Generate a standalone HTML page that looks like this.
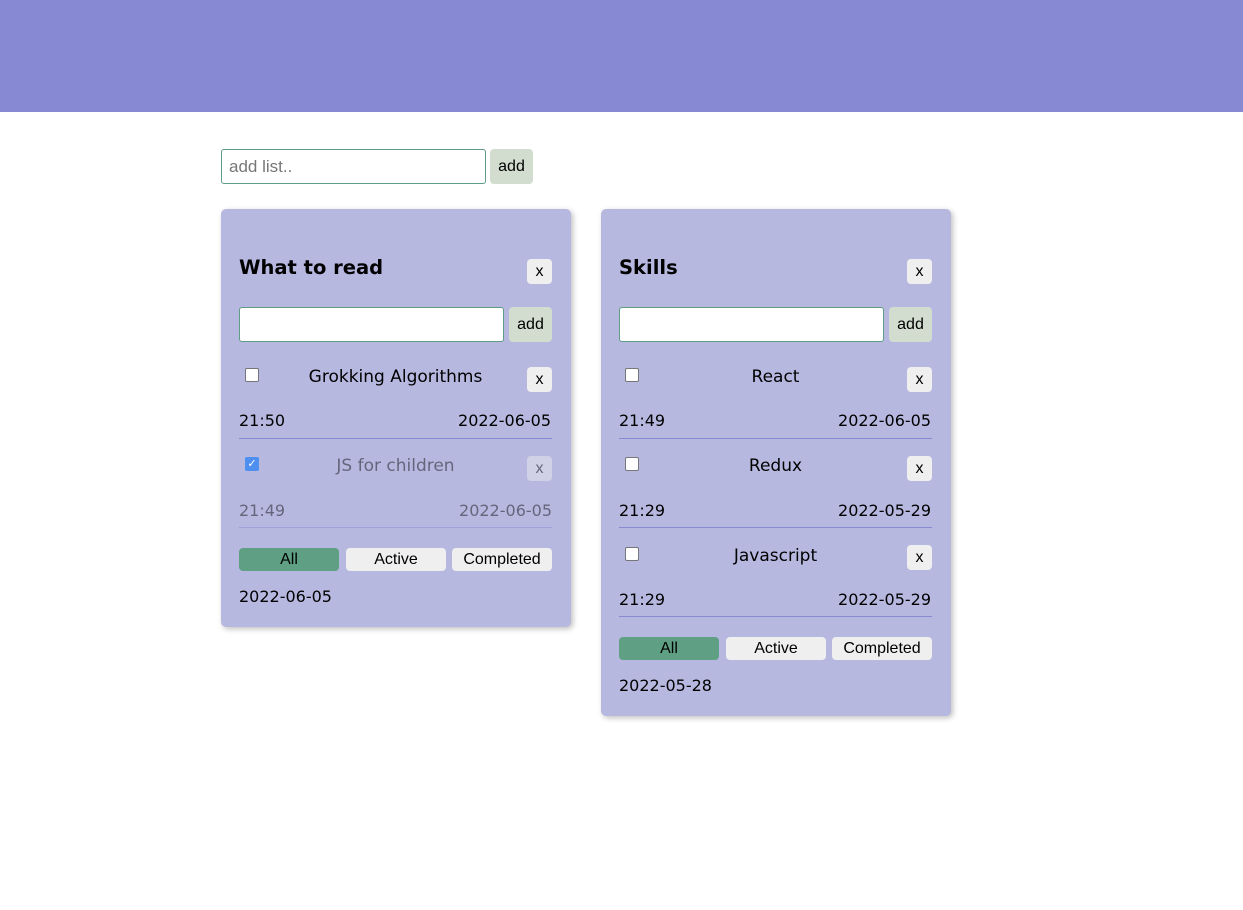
<!DOCTYPE html>
<html><head><meta charset="utf-8"><style>
*{box-sizing:border-box;margin:0;padding:0}
body{width:1243px;height:910px;background:#fff;font-family:"DejaVu Sans","Liberation Sans",sans-serif;position:relative;overflow:hidden;color:#000}
.a{position:absolute}
.hdr{left:0;top:0;width:1243px;height:112px;background:#8789d3}
.inp{background:#fff;border:1px solid #5f9c84;border-radius:3px}
.addb{background:#d2ddcf;border-radius:4px;font-family:"Liberation Sans",sans-serif;font-size:16px;display:flex;align-items:center;justify-content:center}
.card{background:#b7b8e0;border-radius:5px;box-shadow:2px 2px 6px rgba(0,0,0,.25)}
.xb{width:25px;height:25px;background:#efefef;border-radius:4px;font-family:"Liberation Sans",sans-serif;font-size:16px;display:flex;align-items:center;justify-content:center}
.t{font-size:17px;white-space:nowrap}
.d{font-size:16px;white-space:nowrap}
.cb{width:14px;height:14px;border:1px solid #767676;border-radius:2px;background:#fff}
.cbc{width:14px;height:14px;border-radius:2px;background:#4f8ff0;color:#fff;font-size:11px;text-align:center;line-height:14px;font-weight:bold}
.ln{height:1px;background:#8789d3}
.f{height:23px;border-radius:4px;font-family:"Liberation Sans",sans-serif;font-size:16px;display:flex;align-items:center;justify-content:center;background:#efefef;width:100px}
.title{font-size:19.5px;font-weight:bold}
.dim{opacity:.45}
</style></head><body>
<div class="a hdr"></div>
<div class="a inp" style="left:221px;top:149px;width:265px;height:35px"></div>
<div class="a" style="left:229px;top:157px;font-family:'Liberation Sans',sans-serif;font-size:17px;color:#777">add list..</div>
<div class="a addb" style="left:490px;top:149px;width:43px;height:35px">add</div>

<!-- card 1 -->
<div class="a card" style="left:221px;top:209px;width:350px;height:418px"></div>
<div class="a title" style="left:239px;top:256px">What to read</div>
<div class="a xb" style="left:527px;top:259px">x</div>
<div class="a inp" style="left:239px;top:307px;width:265px;height:35px"></div>
<div class="a addb" style="left:509px;top:307px;width:43px;height:35px">add</div>

<div class="a cb" style="left:245px;top:368px"></div>
<div class="a t" style="left:239px;width:313px;text-align:center;top:367px">Grokking Algorithms</div>
<div class="a xb" style="left:527px;top:367px">x</div>
<div class="a d" style="left:239px;top:411px">21:50</div>
<div class="a d" style="right:692px;top:411px">2022-06-05</div>
<div class="a ln" style="left:239px;top:438px;width:313px"></div>

<div class="a cbc" style="left:245px;top:457px">✓</div>
<div class="a dim" style="left:239px;top:456px;width:313px;height:72px">
 <div class="a t" style="left:0;width:313px;text-align:center;top:0">JS for children</div>
 <div class="a xb" style="left:288px;top:0">x</div>
 <div class="a d" style="left:0;top:45px">21:49</div>
 <div class="a d" style="right:0;top:45px">2022-06-05</div>
 <div class="a ln" style="left:0;top:71px;width:313px"></div>
</div>

<div class="a f" style="left:239px;top:548px;background:#5f9f84">All</div>
<div class="a f" style="left:346px;top:548px">Active</div>
<div class="a f" style="left:452px;top:548px">Completed</div>
<div class="a d" style="left:239px;top:587px">2022-06-05</div>

<!-- card 2 -->
<div class="a card" style="left:601px;top:209px;width:350px;height:507px"></div>
<div class="a title" style="left:619px;top:256px">Skills</div>
<div class="a xb" style="left:907px;top:259px">x</div>
<div class="a inp" style="left:619px;top:307px;width:265px;height:35px"></div>
<div class="a addb" style="left:889px;top:307px;width:43px;height:35px">add</div>

<div class="a cb" style="left:625px;top:368px"></div>
<div class="a t" style="left:619px;width:313px;text-align:center;top:367px">React</div>
<div class="a xb" style="left:907px;top:367px">x</div>
<div class="a d" style="left:619px;top:411px">21:49</div>
<div class="a d" style="right:312px;top:411px">2022-06-05</div>
<div class="a ln" style="left:619px;top:438px;width:313px"></div>

<div class="a cb" style="left:625px;top:457px"></div>
<div class="a t" style="left:619px;width:313px;text-align:center;top:456px">Redux</div>
<div class="a xb" style="left:907px;top:456px">x</div>
<div class="a d" style="left:619px;top:501px">21:29</div>
<div class="a d" style="right:312px;top:501px">2022-05-29</div>
<div class="a ln" style="left:619px;top:527px;width:313px"></div>

<div class="a cb" style="left:625px;top:547px"></div>
<div class="a t" style="left:619px;width:313px;text-align:center;top:546px">Javascript</div>
<div class="a xb" style="left:907px;top:545px">x</div>
<div class="a d" style="left:619px;top:590px">21:29</div>
<div class="a d" style="right:312px;top:590px">2022-05-29</div>
<div class="a ln" style="left:619px;top:616px;width:313px"></div>

<div class="a f" style="left:619px;top:637px;background:#5f9f84">All</div>
<div class="a f" style="left:726px;top:637px">Active</div>
<div class="a f" style="left:832px;top:637px">Completed</div>
<div class="a d" style="left:619px;top:676px">2022-05-28</div>
</body></html>
